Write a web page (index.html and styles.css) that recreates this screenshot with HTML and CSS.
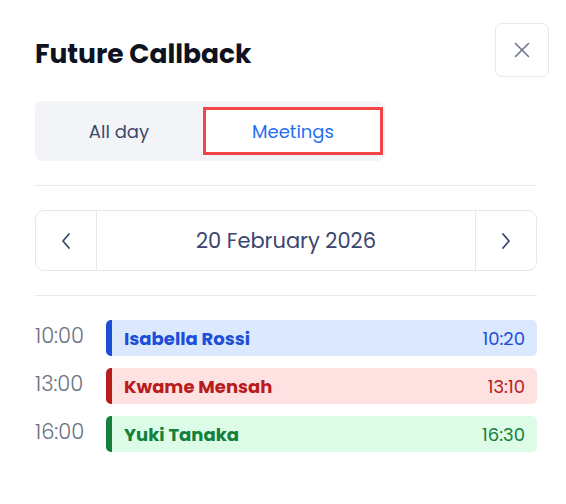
FILE: index.html
```html
<!DOCTYPE html>
<html lang="en">
<head>
<meta charset="utf-8">
<title>Future Callback</title>
<link rel="stylesheet" href="styles.css">
</head>
<body>
<div class="panel">
  <div class="header">
    <h1 class="title">Future Callback</h1>
    <button class="close" aria-label="Close">
      <svg width="16" height="16" viewBox="0 0 16 16"><path d="M1.5 1.5 L14.5 14.5 M14.5 1.5 L1.5 14.5" stroke="#6f748f" stroke-width="1.6" stroke-linecap="round" fill="none"/></svg>
    </button>
  </div>
  <div class="tabs">
    <div class="tab">All day</div>
    <div class="tab active">Meetings</div>
  </div>
  <hr class="divider">
  <div class="datenav">
    <button class="navbtn" aria-label="Previous">
      <svg width="12" height="18" viewBox="0 0 12 18"><path d="M9 2 L3 9 L9 16" stroke="#3b4670" stroke-width="1.8" stroke-linecap="round" stroke-linejoin="round" fill="none"/></svg>
    </button>
    <div class="date">20 February 2026</div>
    <button class="navbtn" aria-label="Next">
      <svg width="12" height="18" viewBox="0 0 12 18"><path d="M3 2 L9 9 L3 16" stroke="#3b4670" stroke-width="1.8" stroke-linecap="round" stroke-linejoin="round" fill="none"/></svg>
    </button>
  </div>
  <hr class="divider">
  <div class="events">
    <div class="time">10:00</div>
    <div class="event blue"><span class="name">Isabella Rossi</span><span class="end">10:20</span></div>
    <div class="time">13:00</div>
    <div class="event red"><span class="name">Kwame Mensah</span><span class="end">13:10</span></div>
    <div class="time">16:00</div>
    <div class="event green"><span class="name">Yuki Tanaka</span><span class="end">16:30</span></div>
  </div>
</div>
</body>
</html>
```
FILE: styles.css
```css
* { box-sizing: border-box; }
html, body { margin: 0; padding: 0; background: #ffffff; }
body { font-family: "Poppins", "Inter", "Noto Sans", sans-serif; color: #0f1220; }

.panel {
  width: 566px;
  padding: 23px 29px 0 35px;
}

.header {
  display: flex;
  justify-content: space-between;
  align-items: center;
  margin-right: -12px;
  height: 54px;
}

.title {
  margin: 8px 0 0 0;
  font-size: 26.5px;
  font-weight: 700;
  line-height: 32px;
  color: #0f1220;
  letter-spacing: 0;
}

.close {
  width: 54px;
  height: 54px;
  border: 1px solid #e6e8ef;
  border-radius: 7px;
  background: #fff;
  display: flex;
  align-items: center;
  justify-content: center;
  padding: 0;
}

.tabs {
  margin-top: 24px;
  display: inline-flex;
  gap: 6px;
  padding: 6px 2px 6px 6px;
  background: #f3f4f8;
  border-radius: 8px;
}

.tab {
  height: 48px;
  display: flex;
  align-items: center;
  justify-content: center;
  font-size: 18px;
  color: #3d4a6b;
  border: 3px solid transparent;
}
.tab:first-child { width: 156px; }
.tab.active {
  width: 180px;
  background: #fff;
  color: #1f6ff2;
  border-color: #f44448;
}

.divider {
  margin: 24px 0;
  border: 0;
  border-top: 1px solid #e7e8ec;
  height: 0;
}

.datenav {
  display: flex;
  height: 61px;
  border: 1px solid #e5e7eb;
  border-radius: 9px;
}

.navbtn {
  width: 61px;
  border: 0;
  background: transparent;
  display: flex;
  align-items: center;
  justify-content: center;
  padding: 0;
}
.navbtn:first-child { border-right: 1px solid #e5e7eb; }
.navbtn:last-child { border-left: 1px solid #e5e7eb; }

.date {
  flex: 1;
  display: flex;
  align-items: center;
  justify-content: center;
  font-size: 21px;
  color: #3b4670;
}

.events {
  display: grid;
  grid-template-columns: 71px 1fr;
  row-gap: 12px;
}

.time {
  font-size: 21px;
  font-weight: 300;
  color: #6b7283;
  line-height: 30px;
  margin-top: 1px;
}

.event {
  height: 36px;
  border-radius: 5px;
  border-left: 6px solid;
  display: flex;
  align-items: center;
  justify-content: space-between;
  padding: 0 12px 0 12px;
  font-size: 18px;
}
.event .name { font-weight: 700; }
.event.blue { background: #dbe8fe; border-left-color: #1d4ed8; color: #1d4ed8; }
.event.red { background: #fee2e2; border-left-color: #b91c1c; color: #b91c1c; }
.event.green { background: #dcfce7; border-left-color: #15803d; color: #15803d; }
```
